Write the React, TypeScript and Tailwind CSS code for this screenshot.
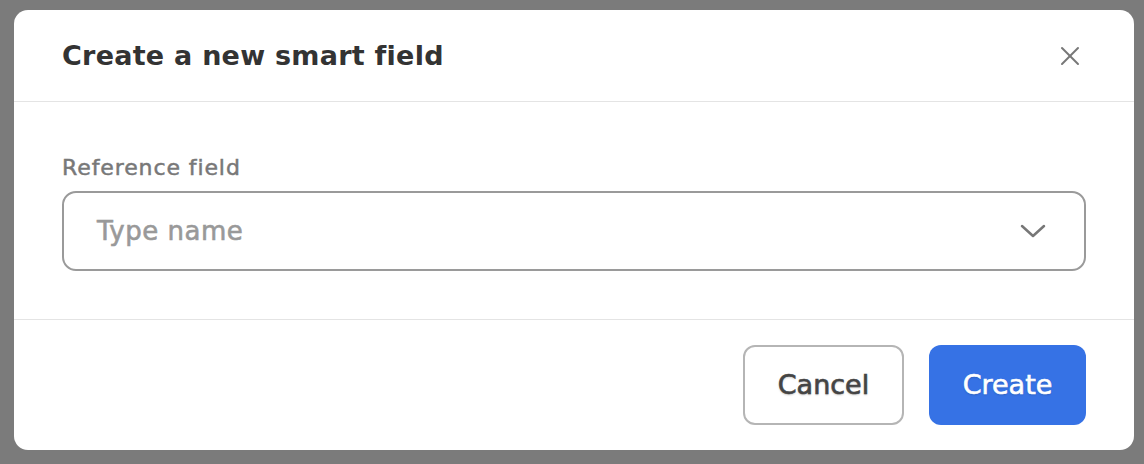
import React from 'react';

const CloseIcon = () => (
    <svg width="20" height="20" viewBox="0 0 20 20" fill="none" stroke="#777777" strokeWidth="2" strokeLinecap="round"><line x1="2" y1="2" x2="18" y2="18"></line><line x1="18" y1="2" x2="2" y2="18"></line></svg>
);

const ChevronIcon = () => (
    <svg width="26" height="14" viewBox="0 0 26 14" fill="none" stroke="#777777" strokeWidth="2.5" strokeLinecap="round" strokeLinejoin="round"><polyline points="2 2 13 12 24 2"></polyline></svg>
);

const App: React.FC = () => {
    return (
        <div className="w-[1144px] h-[464px] bg-[#7b7b7b] pt-[10px] pl-[14px] font-['DejaVu_Sans','Liberation_Sans',sans-serif]">
            <div className="w-[1120px] h-[440px] bg-white rounded-[14px] flex flex-col">
                <div className="h-[92px] flex items-center justify-between pl-[48px] pr-[54px] border-b border-[#e4e4e4]">
                    <h2 className="text-[27px] font-bold tracking-[0.25px] text-[#333333] pt-[2px]">Create a new smart field</h2>
                    <button className="flex items-center"><CloseIcon /></button>
                </div>
                <div className="px-[48px] pt-[51px] pb-[48px] border-b border-[#e4e4e4]">
                    <label className="block text-[22px] leading-[30px] tracking-[0.9px] text-[#787878] [-webkit-text-stroke:0.5px]">Reference field</label>
                    <div className="mt-[8px] h-[80px] border-2 border-[#9a9a9a] rounded-[14px] flex items-center justify-between pl-[33px] pr-[38px]">
                        <span className="text-[26px] tracking-[0.5px] text-[#999999] [-webkit-text-stroke:0.6px]">Type name</span>
                        <ChevronIcon />
                    </div>
                </div>
                <div className="flex-1 flex justify-end items-start gap-[25px] pt-[25px] pr-[48px]">
                    <button className="w-[161px] h-[80px] border-2 border-[#b5b5b5] rounded-[12px] text-[27px] text-[#444444] [-webkit-text-stroke:0.6px] [text-shadow:0_1px_2px_rgba(0,0,0,0.25)]">Cancel</button>
                    <button className="w-[157px] h-[80px] bg-[#3672e5] rounded-[12px] text-[27px] text-white [-webkit-text-stroke:0.6px] [text-shadow:0_1px_2px_rgba(0,0,0,0.2)]">Create</button>
                </div>
            </div>
        </div>
    );
};

export default App;
